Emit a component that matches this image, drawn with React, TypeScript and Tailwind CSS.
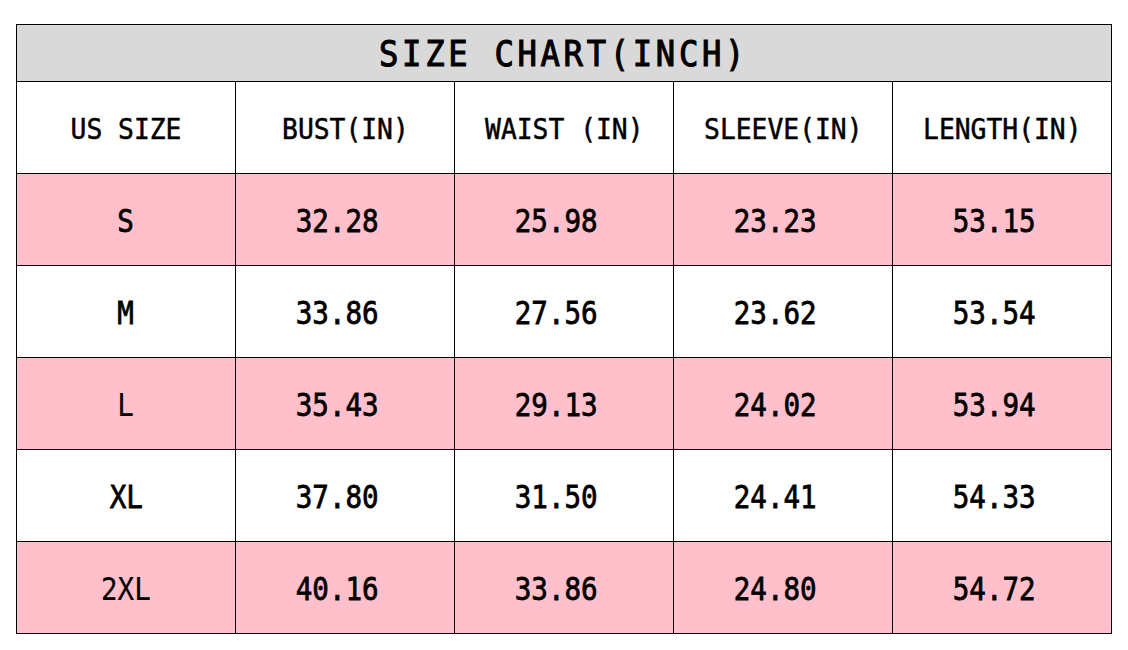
const headers = ["US SIZE", "BUST(IN)", "WAIST (IN)", "SLEEVE(IN)", "LENGTH(IN)"];

const rows: { size: string; bold: boolean; values: string[] }[] = [
  { size: "S", bold: true, values: ["32.28", "25.98", "23.23", "53.15"] },
  { size: "M", bold: true, values: ["33.86", "27.56", "23.62", "53.54"] },
  { size: "L", bold: false, values: ["35.43", "29.13", "24.02", "53.94"] },
  { size: "XL", bold: true, values: ["37.80", "31.50", "24.41", "54.33"] },
  { size: "2XL", bold: false, values: ["40.16", "33.86", "24.80", "54.72"] },
];

function Cell({ text, bold, pink, num }: { text: string; bold: boolean; pink: boolean; num?: boolean }) {
  return (
    <div
      className={`flex h-[92px] items-center justify-center border-r border-b border-black pt-[2px] ${
        num ? "pr-[16px]" : ""
      } ${pink ? "bg-[#ffc0cb]" : "bg-white"}`}
    >
      <span
        className={`inline-block scale-x-[0.86] whitespace-pre text-[32px] leading-none text-black ${
          bold ? "[-webkit-text-stroke:0.8px_black]" : "[-webkit-text-stroke:0.2px_black]"
        }`}
      >
        {text}
      </span>
    </div>
  );
}

export default function App() {
  return (
    <main
      className="min-h-screen bg-white pt-[24px] pl-[16px]"
      style={{ fontFamily: '"DejaVu Sans Mono", "Liberation Mono", monospace' }}
    >
      <div className="grid w-[1096px] grid-cols-5 border-t border-l border-black">
        <div className="col-span-5 flex h-[57px] items-center justify-center border-r border-b border-black bg-[#d9d9d9] pt-[2px]">
          <span className="inline-block scale-x-[0.92] whitespace-pre text-[35px] leading-none tracking-[4px] text-black [-webkit-text-stroke:1.1px_black]">
            SIZE CHART(INCH)
          </span>
        </div>

        {headers.map((h) => (
          <div
            key={h}
            className="flex h-[92px] items-center justify-center border-r border-b border-black bg-white pt-[5px]"
          >
            <span className="inline-block scale-x-[0.94] whitespace-pre text-[28px] leading-none text-black [-webkit-text-stroke:0.5px_black]">
              {h}
            </span>
          </div>
        ))}

        {rows.map((r, i) => (
          <div key={r.size} className="contents">
            <Cell text={r.size} bold={r.bold} pink={i % 2 === 0} />
            {r.values.map((v, j) => (
              <Cell key={j} text={v} bold={true} num pink={i % 2 === 0} />
            ))}
          </div>
        ))}
      </div>
    </main>
  );
}
